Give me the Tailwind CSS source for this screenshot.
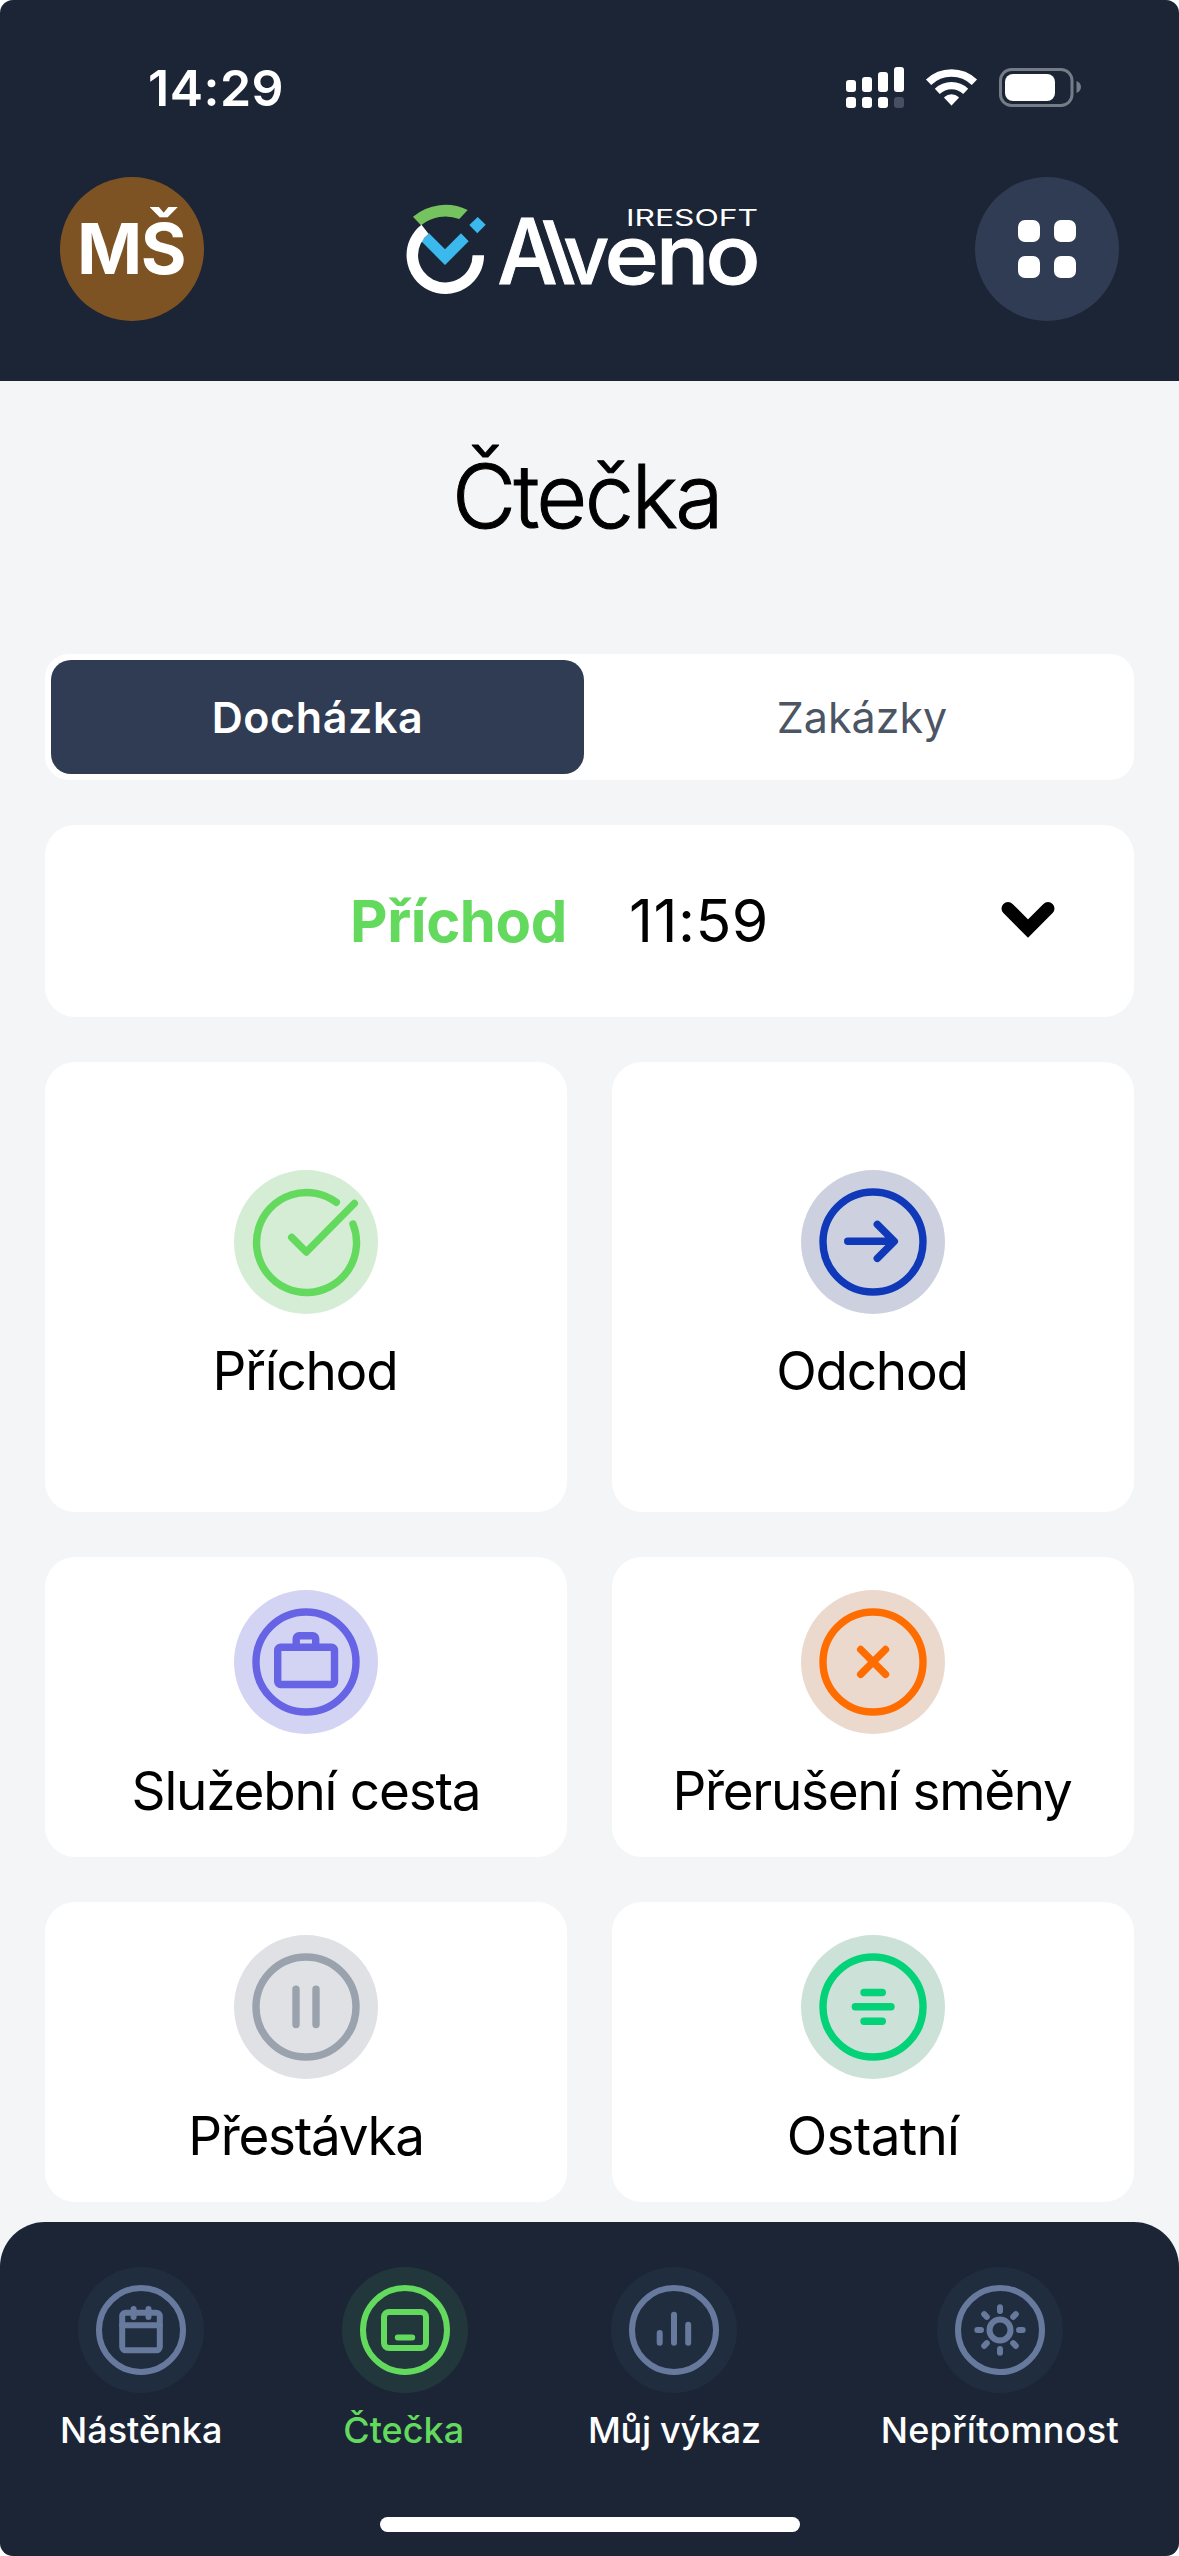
<!DOCTYPE html>
<html lang="cs">
<head>
  <meta charset="UTF-8" />
  <meta name="viewport" content="width=device-width, initial-scale=1.0" />
  <title>Alveno – Čtečka</title>
  <script src="https://cdn.jsdelivr.net/npm/@tailwindcss/browser@4"></script>
</head>
<body class="bg-white font-['Inter',sans-serif] text-black">
  <div class="w-[1179px] h-[2556px] flex flex-col bg-[#f4f5f7] overflow-hidden rounded-[13px]">

    <header class="h-[381px] shrink-0 bg-[#1b2536] pt-[67px]">
      <!-- status bar -->
      <div class="h-[41px] flex items-center justify-between pl-[148px] pr-[98px]">
        <span class="text-[50px] leading-none font-semibold tracking-[0.5px] text-white">14:29</span>
        <svg class="w-[235px] h-[41px]" viewBox="0 0 235 41" fill="#fff">
          <rect x="0" y="13" width="10" height="12" rx="3" />
          <rect x="16" y="10" width="10" height="15" rx="3" />
          <rect x="32" y="5" width="10" height="20" rx="3" />
          <rect x="48" y="0" width="10" height="25" rx="3" />
          <rect x="0" y="30" width="10" height="11" rx="3" />
          <rect x="16" y="30" width="10" height="11" rx="3" />
          <rect x="32" y="30" width="10" height="11" rx="3" />
          <rect x="48" y="30" width="10" height="11" rx="3" fill="#475062" />
          <path d="M82.6 15.3a33 33 0 0 1 45.8 0" fill="none" stroke="#fff" stroke-width="7.6" />
          <path d="M91.3 24.3a20.5 20.5 0 0 1 28.4 0" fill="none" stroke="#fff" stroke-width="7.2" />
          <path d="M98.9 30.6a10 10 0 0 1 13.2 0l-6.6 7z" stroke="#fff" stroke-width="1.5" stroke-linejoin="round" />
          <rect x="154.5" y="2.5" width="71.5" height="36" rx="11" fill="none" stroke="#767c87" stroke-width="3" />
          <rect x="159" y="7" width="50" height="27" rx="8" />
          <path d="M230.5 14c3 1 4.5 3.5 4.5 6s-1.5 5-4.500 6z" fill="#767c87" />
        </svg>
      </div>

      <div class="mt-[69px] h-[144px] flex items-center justify-between px-[60px]">
        <div class="size-[144px] rounded-full bg-[#7e5323] pr-[2px] flex items-center justify-center text-[70px] leading-none font-bold tracking-[-1.5px] text-white">MŠ</div>
        <svg class="w-[399px] h-[118px] text-white" viewBox="0 0 399 118" fill="currentColor">
          <path d="M39 43.3L55 59.3L71 43.3L78.7 51.3L55 75L31.3 51.3z" fill="#3cb9ec" />
          <path d="M87.7 27L95.7 34.7L87.3 43.3L79.3 35z" fill="#3cb9ec" />
          <path d="M23 26.7A50.3 50.3 0 0 1 77.7 20L69.3 29A38.5 38.5 0 0 0 31 35.3z" fill="#74c35e" />
          <path d="M88.3 65.2A33 33 0 1 1 35 39.2" fill="none" stroke="#fff" stroke-width="11.5" />
          <g font-size="82" font-weight="500" stroke="currentColor" stroke-width="1">
            <text transform="translate(107.5 94) scale(.93 1)" font-size="91">A</text>
            <text transform="translate(168.5 94) skewX(18.8)" font-size="87">l</text>
            <text transform="translate(173.5 94) scale(.97 1)">v</text>
            <text transform="translate(214.5 94) scale(1.13 1)">e</text>
            <text transform="translate(266 94) scale(1.08 1)">n</text>
            <text transform="translate(315.5 94) scale(1.11 1)">o</text>
          </g>
          <text x="236" y="36" font-size="22.5" font-weight="400" textLength="132" lengthAdjust="spacingAndGlyphs">IRESOFT</text>
        </svg>
        <div class="size-[144px] rounded-full bg-[#2f3c53] flex items-center justify-center">
          <div class="grid grid-cols-2 gap-[14px]">
            <span class="size-[22px] rounded-[7px] bg-white"></span>
            <span class="size-[22px] rounded-[7px] bg-white"></span>
            <span class="size-[22px] rounded-[7px] bg-white"></span>
            <span class="size-[22px] rounded-[7px] bg-white"></span>
          </div>
        </div>
      </div>
    </header>

    <main class="h-[1841px] shrink-0 px-[45px] pt-[60px]">
      <h1 class="pr-[6px] text-center text-[88px] leading-[110px] font-light tracking-[-2.6px] [-webkit-text-stroke:1px_#000]">Čtečka</h1>

      <div class="mt-[103px] h-[126px] rounded-[24px] bg-white p-[6px] flex text-[43px]">
        <div class="w-[533px] rounded-[20px] bg-[#2f3c53] flex items-center justify-center font-semibold tracking-[0.6px] text-white">Docházka</div>
        <div class="flex-1 pl-[12px] flex items-center justify-center text-[#4b5563]">Zakázky</div>
      </div>

      <div class="mt-[45px] h-[192px] rounded-[30px] bg-white flex items-center pl-[305px] pr-[78px] text-[58px]">
        <span class="font-bold tracking-[-0.4px] text-[#63d95e]">Příchod</span>
        <span class="ml-[62px] text-[59px] tracking-[0.5px]">11:59</span>
        <svg class="ml-auto mb-[4px] w-[56px] h-[40px]" viewBox="0 0 56 40" fill="none" stroke="#000" stroke-width="13">
          <path d="M8 9.5L28 29.5L48 9.5" stroke-linecap="round" />
        </svg>
      </div>

      <div class="mt-[45px] grid grid-cols-2 gap-[45px] text-[53px] leading-[68px] tracking-[-1.2px]">
        <div class="h-[450px] rounded-[30px] bg-white flex flex-col items-center justify-center gap-[23px]">
          <svg class="size-[144px] rounded-full bg-[#d5edd4] text-[#63d95e]" viewBox="0 0 144 144" fill="none" stroke="currentColor" stroke-width="7.4" stroke-linecap="round">
            <path d="M119 54A50 50 0 1 1 102.3 32.3" />
            <path d="M57.7 67.3L72.3 82L120.3 33.5" stroke-linejoin="round" />
          </svg>
          <span class="pr-[2px]">Příchod</span>
        </div>
        <div class="h-[450px] rounded-[30px] bg-white flex flex-col items-center justify-center gap-[23px]">
          <svg class="size-[144px] rounded-full bg-[#cdd1df] text-[#0f39b9]" viewBox="0 0 144 144" fill="none" stroke="currentColor" stroke-width="7.4" stroke-linecap="round">
            <circle cx="72" cy="72" r="50" />
            <path d="M46.7 71.3H93M76.3 54.3L93.3 71.3L76.3 88.3" stroke-linejoin="round" />
          </svg>
          <span class="pr-[2px]">Odchod</span>
        </div>
        <div class="h-[300px] rounded-[30px] bg-white flex flex-col items-center justify-center gap-[23px]">
          <svg class="size-[144px] rounded-full bg-[#d3d3f3] text-[#6663e4]" viewBox="0 0 144 144" fill="none" stroke="currentColor" stroke-width="7.4">
            <circle cx="72" cy="72" r="50" />
            <rect x="43.7" y="57.3" width="56.8" height="37.2" rx="3" />
            <path d="M62.2 57.3V48.7a3 3 0 0 1 3-3H78.7a3 3 0 0 1 3 3V57.3" />
          </svg>
          <span>Služební cesta</span>
        </div>
        <div class="h-[300px] rounded-[30px] bg-white flex flex-col items-center justify-center gap-[23px]">
          <svg class="size-[144px] rounded-full bg-[#ebd9ce] text-[#ff6d00]" viewBox="0 0 144 144" fill="none" stroke="currentColor" stroke-width="7.4" stroke-linecap="round">
            <circle cx="72" cy="72" r="50" />
            <path d="M59.7 59.5L84.5 84.3M84.5 59.5L59.7 84.3" />
          </svg>
          <span class="tracking-[-1.3px] pr-[2px]">Přerušení směny</span>
        </div>
        <div class="h-[300px] rounded-[30px] bg-white flex flex-col items-center justify-center gap-[23px]">
          <svg class="size-[144px] rounded-full bg-[#dfe1e5] text-[#9aa2ad]" viewBox="0 0 144 144" fill="none" stroke="currentColor" stroke-width="7.4" stroke-linecap="round">
            <circle cx="72" cy="72" r="50" />
            <path d="M62 54.3V89.5M82 54.3V89.5" />
          </svg>
          <span class="tracking-[-1.3px]">Přestávka</span>
        </div>
        <div class="h-[300px] rounded-[30px] bg-white flex flex-col items-center justify-center gap-[23px]">
          <svg class="size-[144px] rounded-full bg-[#cce1d8] text-[#03d278]" viewBox="0 0 144 144" fill="none" stroke="currentColor" stroke-width="7.4" stroke-linecap="round">
            <circle cx="72" cy="72" r="50" />
            <path d="M63 57.5H81.3M54.3 71.8H90M63 86.2H81.3" />
          </svg>
          <span class="tracking-[-0.7px]">Ostatní</span>
        </div>
      </div>
    </main>

    <nav class="h-[334px] shrink-0 rounded-t-[45px] bg-[#1b2536] pt-[45px] flex flex-col items-center">
      <div class="w-full px-[60px] flex justify-between text-[36px] leading-[43px] font-medium text-white">
        <div class="flex flex-col items-center gap-[16px]">
          <svg class="size-[126px] rounded-full bg-[#202d3f] text-[#677a9d]" viewBox="0 0 126 126" fill="none" stroke="currentColor" stroke-width="6" stroke-linecap="round">
            <circle cx="63" cy="63" r="42" />
            <rect x="44.2" y="45.7" width="37.6" height="37.6" rx="3.5" />
            <path d="M44.2 58.3H81.8" />
            <path d="M55.6 42V50M70.5 42V50" />
          </svg>
          <span>Nástěnka</span>
        </div>
        <div class="flex flex-col items-center gap-[16px] text-[#63d95e]">
          <svg class="size-[126px] rounded-full bg-[#22373b]" viewBox="0 0 126 126" fill="none" stroke="currentColor" stroke-width="6" stroke-linecap="round">
            <circle cx="63" cy="63" r="42" />
            <rect x="42" y="45" width="42" height="36" rx="5" />
            <path d="M55.8 70.5H70.2" />
          </svg>
          <span class="pr-[3px]">Čtečka</span>
        </div>
        <div class="flex flex-col items-center gap-[16px]">
          <svg class="size-[126px] rounded-full bg-[#202d3f] text-[#677a9d]" viewBox="0 0 126 126" fill="none" stroke="currentColor" stroke-width="6" stroke-linecap="round">
            <circle cx="63" cy="63" r="42" />
            <path d="M48.7 66V75.7M63 47.7V75.7M77.2 57.7V75.7" />
          </svg>
          <span class="tracking-[-0.3px]">Můj výkaz</span>
        </div>
        <div class="flex flex-col items-center gap-[16px]">
          <svg class="size-[126px] rounded-full bg-[#202d3f] text-[#677a9d]" viewBox="0 0 126 126" fill="none" stroke="currentColor" stroke-width="6" stroke-linecap="round">
            <circle cx="63" cy="63" r="42" />
            <circle cx="63" cy="63" r="10.5" />
            <path d="M63 40.3V44M63 82V85.7M40.3 63H44M82 63H85.7M47.2 47.2L49.8 49.8M76.2 76.2L78.8 78.8M78.8 47.2L76.2 49.8M49.8 76.2L47.2 78.8" />
          </svg>
          <span class="tracking-[0.3px]">Nepřítomnost</span>
        </div>
      </div>
      <div class="mt-[65px] w-[420px] h-[15px] rounded-full bg-white"></div>
    </nav>

  </div>
</body>
</html>
